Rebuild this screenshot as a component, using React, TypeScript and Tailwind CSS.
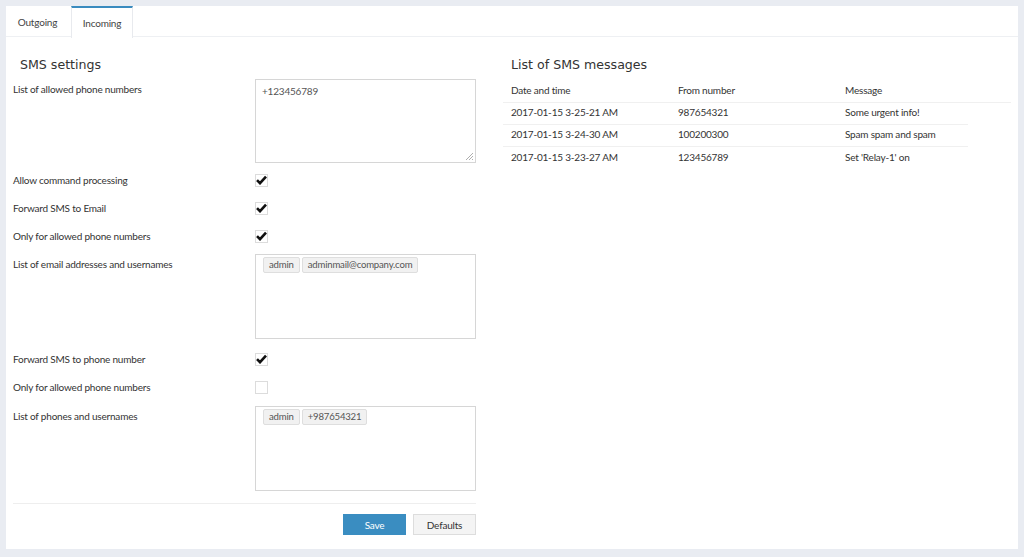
import React from 'react';

const body = { fontFamily: 'Lato, "Open Sans", sans-serif' };
const heading = { fontFamily: '"DejaVu Sans", sans-serif' };

const Check = ({ checked }: { checked: boolean }) => (
  <div className="w-[13px] h-[13px] border border-[#dcdcdc] bg-white flex items-center justify-center">
    {checked && (
      <svg width="11" height="10" viewBox="0 0 11 10">
        <path d="M1 5.2 L4 8.2 L10 1.6" fill="none" stroke="#111" strokeWidth="2.6" strokeLinejoin="miter" />
      </svg>
    )}
  </div>
);

const Tag = ({ text }: { text: string }) => (
  <span className="h-[16px] px-[5px] bg-[#f1f1f1] border border-[#dedede] rounded-[2px] text-[9.6px] leading-[14px] text-[#555]">
    {text}
  </span>
);

const CheckRow = ({ label, checked }: { label: string; checked: boolean }) => (
  <div className="grid grid-cols-[242px_221px] h-[28px] items-center">
    <div className="text-[#333]">{label}</div>
    <Check checked={checked} />
  </div>
);

const TagBox = ({ label, tags, className }: { label: string; tags: string[]; className: string }) => (
  <div className={`grid grid-cols-[242px_221px] ${className}`}>
    <div className="pt-[3px] text-[#333]">{label}</div>
    <div className="h-[85px] border border-[#d6d6d6] bg-white pt-[2px] pl-[7px] flex items-start gap-[2px]">
      {tags.map((t) => (
        <Tag key={t} text={t} />
      ))}
    </div>
  </div>
);

const messages = [
  { date: '2017-01-15 3-25-21 AM', from: '987654321', text: 'Some urgent info!' },
  { date: '2017-01-15 3-24-30 AM', from: '100200300', text: 'Spam spam and spam' },
  { date: '2017-01-15 3-23-27 AM', from: '123456789', text: "Set 'Relay-1' on" },
];

export default function App() {
  return (
    <div className="w-[1024px] h-[557px] bg-[#e9ecf2] pt-[6px] pl-[6px] text-[10px] leading-[14px] tracking-[-0.2px]" style={body}>
      <div className="w-[1012px] h-[543px] bg-white">
        {/* tabs */}
        <div className="h-[31px] flex border-b border-[#eef0f3]">
          <div className="w-[65px] flex items-center justify-center text-[#444] pt-[1px] pr-[2px]">Outgoing</div>
          <div className="w-[62px] border-t-2 border-[#3a8bbf] border-x border-x-[#e8eaee] bg-white flex items-center justify-center text-[#444] h-[32px]">
            Incoming
          </div>
        </div>

        <div className="flex pl-[7px]">
          {/* left: settings */}
          <div className="w-[463px]">
            <h2 className="mt-[20px] ml-[7px] h-[16px] text-[12.6px] leading-[16px] tracking-normal text-[#333]" style={heading}>
              SMS settings
            </h2>

            <div className="grid grid-cols-[242px_221px] mt-[6px]">
              <div className="pt-[3px] text-[#333]">List of allowed phone numbers</div>
              <div className="relative h-[84px] border border-[#d6d6d6] bg-white px-[6px] pt-[4px] text-[#555]">
                +123456789
                <svg className="absolute right-[1px] bottom-[1px]" width="9" height="9" viewBox="0 0 9 9">
                  <path d="M8 1 L1 8 M8 4 L4 8 M8 7 L7 8" stroke="#999" strokeWidth="0.8" />
                </svg>
              </div>
            </div>

            <div className="mt-[3px]">
              <CheckRow label="Allow command processing" checked />
              <CheckRow label="Forward SMS to Email" checked />
              <CheckRow label="Only for allowed phone numbers" checked />
            </div>

            <TagBox label="List of email addresses and usernames" tags={['admin', 'adminmail@company.com']} className="mt-[4px]" />

            <div className="mt-[6px]">
              <CheckRow label="Forward SMS to phone number" checked />
              <CheckRow label="Only for allowed phone numbers" checked={false} />
            </div>

            <TagBox label="List of phones and usernames" tags={['admin', '+987654321']} className="mt-[5px]" />

            <div className="mt-[12px] border-t border-[#eeeeee]" />

            <div className="mt-[10px] flex justify-end gap-[7px]">
              <button className="w-[63px] h-[21px] bg-[#3a8dc1] text-white">Save</button>
              <button className="w-[63px] h-[21px] bg-[#f4f4f4] border border-[#dddddd] text-[#333]">Defaults</button>
            </div>
          </div>

          {/* right: messages */}
          <div className="ml-[27px] w-[508px]">
            <h2 className="mt-[20px] ml-[8px] h-[16px] text-[12.6px] leading-[16px] tracking-normal text-[#333]" style={heading}>
              List of SMS messages
            </h2>
            <div className="mt-[6px]">
              <div className="grid grid-cols-[167px_167px_174px] h-[24px] items-center border-b border-[#f0f0f0] pl-[8px] pb-[2px] text-[#333]">
                <div>Date and time</div>
                <div>From number</div>
                <div>Message</div>
              </div>
              {messages.map((m, i) => (
                <div
                  key={m.date}
                  className={`grid grid-cols-[167px_167px_131px] w-[465px] h-[22px] items-center pl-[8px] pb-[3px] text-[#333] ${i < messages.length - 1 ? 'border-b border-[#f0f0f0]' : ''}`}
                >
                  <div>{m.date}</div>
                  <div>{m.from}</div>
                  <div>{m.text}</div>
                </div>
              ))}
            </div>
          </div>
        </div>
      </div>
    </div>
  );
}
